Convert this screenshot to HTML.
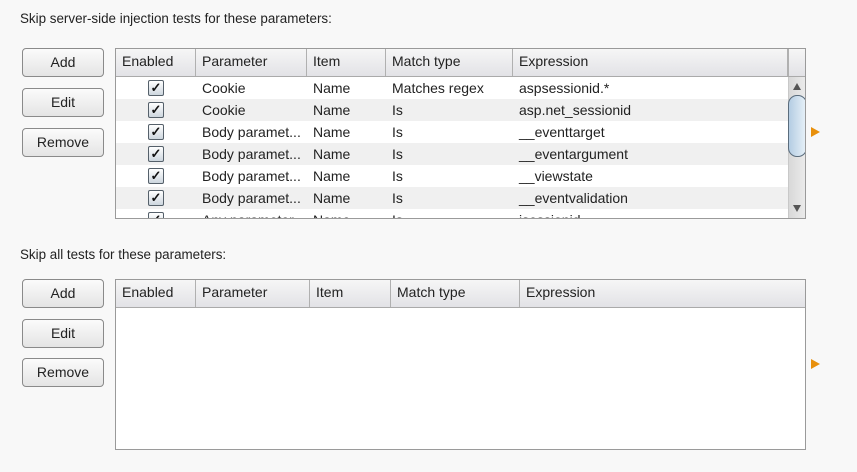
<!DOCTYPE html>
<html><head><style>
body{margin:0;width:857px;height:472px;background:#f8f8f8;font-family:"Liberation Sans",sans-serif;font-size:14px;color:#222;position:relative;overflow:hidden}
.a{position:absolute}
.lbl{position:absolute;left:20px;font-size:13.4px}
.btn{position:absolute;left:22px;width:80px;height:27px;border:1px solid #8a8a8a;border-radius:4px;background:linear-gradient(#fbfbfb,#e4e4e4);text-align:center;line-height:26px;font-size:14px;box-sizing:content-box}
.tbl{position:absolute;left:115px;width:689px;border:1px solid #9a9a9a;background:#fff;overflow:hidden}
.hd{position:absolute;left:0;top:0;height:27px;right:0;background:linear-gradient(#f6f6f6,#e2e2e6);border-bottom:1px solid #aaa}
.hc{position:absolute;top:0;height:27px;line-height:25px;padding-left:6px;border-right:1px solid #b0b0b0;box-sizing:border-box}
.row{position:absolute;left:0;height:22px;width:672px;line-height:22px}
.row.alt{background:#f0f0f0}
.c{position:absolute;top:0;white-space:nowrap}
.cb{position:absolute;left:32px;top:3px;width:14px;height:14px;border:1px solid #55606a;border-radius:2px;background:linear-gradient(#fff,#cdd6de);font-size:13px;line-height:14px;text-align:center;font-weight:bold;color:#111}
.arrow{position:absolute;left:811px;width:0;height:0;border-top:5px solid transparent;border-bottom:5px solid transparent;border-left:9px solid #e8900c}
</style></head><body>
<div class="lbl" style="top:11px">Skip server-side injection tests for these parameters:</div>
<div class="btn" style="top:48px">Add</div>
<div class="btn" style="top:88px">Edit</div>
<div class="btn" style="top:128px">Remove</div>
<div class="tbl" style="top:48px;height:169px">
 <div class="hd">
  <div class="hc" style="left:0;width:80px">Enabled</div>
  <div class="hc" style="left:80px;width:111px">Parameter</div>
  <div class="hc" style="left:191px;width:79px">Item</div>
  <div class="hc" style="left:270px;width:127px">Match type</div>
  <div class="hc" style="left:397px;width:275px">Expression</div>
  <div class="hc" style="left:672px;width:17px;border-right:none;border-left:1px solid #b0b0b0"></div>
 </div>
 <div class="row" style="top:28px"><div class="cb">✓</div><div class="c" style="left:86px">Cookie</div><div class="c" style="left:197px">Name</div><div class="c" style="left:276px">Matches regex</div><div class="c" style="left:403px">aspsessionid.*</div></div>
 <div class="row alt" style="top:50px"><div class="cb">✓</div><div class="c" style="left:86px">Cookie</div><div class="c" style="left:197px">Name</div><div class="c" style="left:276px">Is</div><div class="c" style="left:403px">asp.net_sessionid</div></div>
 <div class="row" style="top:72px"><div class="cb">✓</div><div class="c" style="left:86px">Body paramet...</div><div class="c" style="left:197px">Name</div><div class="c" style="left:276px">Is</div><div class="c" style="left:403px">__eventtarget</div></div>
 <div class="row alt" style="top:94px"><div class="cb">✓</div><div class="c" style="left:86px">Body paramet...</div><div class="c" style="left:197px">Name</div><div class="c" style="left:276px">Is</div><div class="c" style="left:403px">__eventargument</div></div>
 <div class="row" style="top:116px"><div class="cb">✓</div><div class="c" style="left:86px">Body paramet...</div><div class="c" style="left:197px">Name</div><div class="c" style="left:276px">Is</div><div class="c" style="left:403px">__viewstate</div></div>
 <div class="row alt" style="top:138px"><div class="cb">✓</div><div class="c" style="left:86px">Body paramet...</div><div class="c" style="left:197px">Name</div><div class="c" style="left:276px">Is</div><div class="c" style="left:403px">__eventvalidation</div></div>
 <div class="row" style="top:160px"><div class="cb">✓</div><div class="c" style="left:86px">Any parameter</div><div class="c" style="left:197px">Name</div><div class="c" style="left:276px">Is</div><div class="c" style="left:403px">jsessionid</div></div>
 <div class="a" style="left:672px;top:28px;width:17px;height:141px;background:linear-gradient(90deg,#d8d8d8,#ececec);border-left:1px solid #c8c8c8">
  <div class="a" style="left:4px;top:6px;border-left:4px solid transparent;border-right:4px solid transparent;border-bottom:7px solid #555;width:0;height:0"></div>
  <div class="a" style="left:-1px;top:18px;width:19px;height:62px;border:1px solid #5a6c7c;border-radius:9px;background:linear-gradient(90deg,#b4cde3,#e8f1f8);box-sizing:border-box"></div>
  <div class="a" style="left:4px;top:128px;border-left:4px solid transparent;border-right:4px solid transparent;border-top:7px solid #555;width:0;height:0"></div>
 </div>
</div>
<div class="arrow" style="top:127px"></div>

<div class="lbl" style="top:247px">Skip all tests for these parameters:</div>
<div class="btn" style="top:279px">Add</div>
<div class="btn" style="top:319px">Edit</div>
<div class="btn" style="top:358px">Remove</div>
<div class="tbl" style="top:279px;height:169px">
 <div class="hd">
  <div class="hc" style="left:0;width:80px">Enabled</div>
  <div class="hc" style="left:80px;width:114px">Parameter</div>
  <div class="hc" style="left:194px;width:81px">Item</div>
  <div class="hc" style="left:275px;width:129px">Match type</div>
  <div class="hc" style="left:404px;width:285px;border-right:none">Expression</div>
 </div>
</div>
<div class="arrow" style="top:359px"></div>
</body></html>
